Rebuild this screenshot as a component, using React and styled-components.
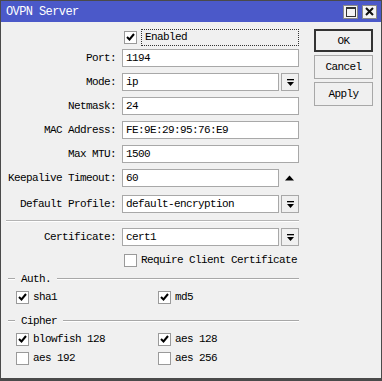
import styled, { createGlobalStyle } from 'styled-components';

const Global = createGlobalStyle`
  body {
    margin: 0;
    background: #f0f0f0;
    font-family: 'Liberation Mono', 'DejaVu Sans Mono', monospace;
    font-size: 11px;
    letter-spacing: -0.6px;
    color: #000;
  }
`;

const Window = styled.div`
  width: 382px;
  height: 381px;
  box-sizing: border-box;
  background: #f0f0f0;
  border: 1px solid #4a4a4a;
  border-bottom: 3px solid #4a4a4a;
  display: flex;
  flex-direction: column;
`;

const TitleBar = styled.div`
  height: 21px;
  background: #4b59c9;
  color: #fff;
  display: flex;
  align-items: center;
  padding: 0 4px 0 5px;
  font-size: 12px;
`;

const Title = styled.span`
  flex: 1;
`;

const TitleButton = styled.div`
  width: 15px;
  height: 14px;
  box-sizing: border-box;
  background: #f4f4f4;
  border: 1px solid #8a8a8a;
  margin-left: 4px;
  display: flex;
  align-items: center;
  justify-content: center;
`;

const Body = styled.div`
  display: flex;
  padding-top: 6px;
`;

const Form = styled.div`
  width: 293px;
  padding-left: 5px;
  display: flex;
  flex-direction: column;
`;

const Row = styled.div`
  display: grid;
  grid-template-columns: 110px 177px;
  column-gap: 6px;
  height: 18px;
  align-items: center;
  margin-top: ${(p) => p.$top || 0}px;
`;

const Label = styled.div`
  text-align: right;
  white-space: nowrap;
`;

const Field = styled.div`
  display: flex;
  align-items: center;
  height: 18px;
`;

const Input = styled.div`
  flex: 1;
  height: 18px;
  box-sizing: border-box;
  background: #fff;
  border: 1px solid #a8a8a8;
  padding-left: 3px;
  display: flex;
  align-items: center;
  white-space: nowrap;
  overflow: hidden;
`;

const DropButton = styled.div`
  width: 18px;
  height: 18px;
  box-sizing: border-box;
  margin-left: 2px;
  border: 1px solid #a8a8a8;
  background: #f0f0f0;
  display: flex;
  align-items: center;
  justify-content: center;
`;

const ArrowSlot = styled.div`
  width: 20px;
  display: flex;
  align-items: center;
  justify-content: center;
`;

const CheckLine = styled.div`
  display: flex;
  align-items: center;
  padding-left: 2px;
  gap: 4px;
  height: 18px;
`;

const Box = styled.div`
  width: 13px;
  height: 13px;
  box-sizing: border-box;
  background: #fff;
  border: 1px solid #9a9a9a;
  display: flex;
  align-items: center;
  justify-content: center;
  flex-shrink: 0;
`;

const FocusLabel = styled.div`
  flex: 1;
  height: 17px;
  box-sizing: border-box;
  border: 1px dotted #333;
  padding-left: 3px;
  display: flex;
  align-items: center;
`;

const Separator = styled.div`
  height: 0;
  border-top: 1px solid #b4b4b4;
  border-bottom: 1px solid #fff;
  margin: 7px 0 6px;
`;

const GroupHeader = styled.div`
  display: flex;
  align-items: center;
  height: 14px;
  padding-left: 2px;
  margin-top: ${(p) => p.$top || 0}px;
`;

const ShortLine = styled.div`
  width: 7px;
  border-top: 1px solid #a8a8a8;
  border-bottom: 1px solid #fff;
`;

const LongLine = styled.div`
  flex: 1;
  border-top: 1px solid #a8a8a8;
  border-bottom: 1px solid #fff;
`;

const GroupTitle = styled.span`
  margin: 0 6px;
`;

const CheckGrid = styled.div`
  display: grid;
  grid-template-columns: 142px 140px;
  padding-left: 10px;
  margin-top: ${(p) => p.$top || 0}px;
`;

const CheckItem = styled.div`
  display: flex;
  align-items: center;
  gap: 4px;
  height: 14px;
  margin-bottom: 5px;
`;

const Buttons = styled.div`
  margin-left: 15px;
  padding-top: 1px;
  display: flex;
  flex-direction: column;
  gap: 3px;
`;

const Button = styled.div`
  width: 59px;
  height: ${(p) => (p.$default ? 23 : 24)}px;
  box-sizing: border-box;
  border: ${(p) => (p.$default ? '2px solid #333' : '1px solid #a8a8a8')};
  background: #f0f0f0;
  display: flex;
  align-items: center;
  justify-content: center;
`;

const Tick = () => (
  <svg width="9" height="8" viewBox="0 0 9 8">
    <path d="M1 4 L3.5 6.5 L8 1" fill="none" stroke="#000" strokeWidth="2" />
  </svg>
);

const DropIcon = () => (
  <svg width="9" height="9" viewBox="0 0 9 9">
    <rect x="1" y="1" width="7" height="1.3" fill="#000" />
    <path d="M1 4 H8 L4.5 8 Z" fill="#000" />
  </svg>
);

const Check = ({ on, children }) => (
  <CheckItem>
    <Box>{on && <Tick />}</Box>
    <span>{children}</span>
  </CheckItem>
);

const TextRow = ({ label, value, top }) => (
  <Row $top={top}>
    <Label>{label}</Label>
    <Field>
      <Input>{value}</Input>
    </Field>
  </Row>
);

const DropRow = ({ label, value, top }) => (
  <Row $top={top}>
    <Label>{label}</Label>
    <Field>
      <Input>{value}</Input>
      <DropButton>
        <DropIcon />
      </DropButton>
    </Field>
  </Row>
);

export default function App() {
  return (
    <>
      <Global />
      <Window>
        <TitleBar>
          <Title>OVPN Server</Title>
          <TitleButton>
            <svg width="10" height="10" viewBox="0 0 10 10">
              <rect x="0.5" y="0.5" width="9" height="9" fill="none" stroke="#333" />
              <rect x="0.5" y="0.5" width="9" height="1.5" fill="#333" />
            </svg>
          </TitleButton>
          <TitleButton>
            <svg width="9" height="9" viewBox="0 0 9 9">
              <path d="M1 1 L8 8 M8 1 L1 8" stroke="#111" strokeWidth="2" />
            </svg>
          </TitleButton>
        </TitleBar>
        <Body>
          <Form>
            <Row>
              <Label />
              <CheckLine>
                <Box>
                  <Tick />
                </Box>
                <FocusLabel>Enabled</FocusLabel>
              </CheckLine>
            </Row>
            <TextRow label="Port:" value="1194" top={3} />
            <DropRow label="Mode:" value="ip" top={6} />
            <TextRow label="Netmask:" value="24" top={6} />
            <TextRow label="MAC Address:" value="FE:9E:29:95:76:E9" top={6} />
            <TextRow label="Max MTU:" value="1500" top={6} />
            <Row $top={6}>
              <Label>Keepalive Timeout:</Label>
              <Field>
                <Input>60</Input>
                <ArrowSlot>
                  <svg width="9" height="6" viewBox="0 0 9 6">
                    <path d="M0 5.5 L4.5 0.5 L9 5.5 Z" fill="#000" />
                  </svg>
                </ArrowSlot>
              </Field>
            </Row>
            <DropRow label="Default Profile:" value="default-encryption" top={8} />
            <Separator />
            <DropRow label="Certificate:" value="cert1" />
            <Row $top={5}>
              <Label />
              <CheckLine>
                <Box />
                <span>Require Client Certificate</span>
              </CheckLine>
            </Row>
            <GroupHeader $top={3}>
              <ShortLine />
              <GroupTitle>Auth.</GroupTitle>
              <LongLine />
            </GroupHeader>
            <CheckGrid $top={4}>
              <Check on>sha1</Check>
              <Check on>md5</Check>
            </CheckGrid>
            <GroupHeader $top={5}>
              <ShortLine />
              <GroupTitle>Cipher</GroupTitle>
              <LongLine />
            </GroupHeader>
            <CheckGrid $top={4}>
              <Check on>blowfish 128</Check>
              <Check on>aes 128</Check>
              <Check>aes 192</Check>
              <Check>aes 256</Check>
            </CheckGrid>
          </Form>
          <Buttons>
            <Button $default>OK</Button>
            <Button>Cancel</Button>
            <Button>Apply</Button>
          </Buttons>
        </Body>
      </Window>
    </>
  );
}
